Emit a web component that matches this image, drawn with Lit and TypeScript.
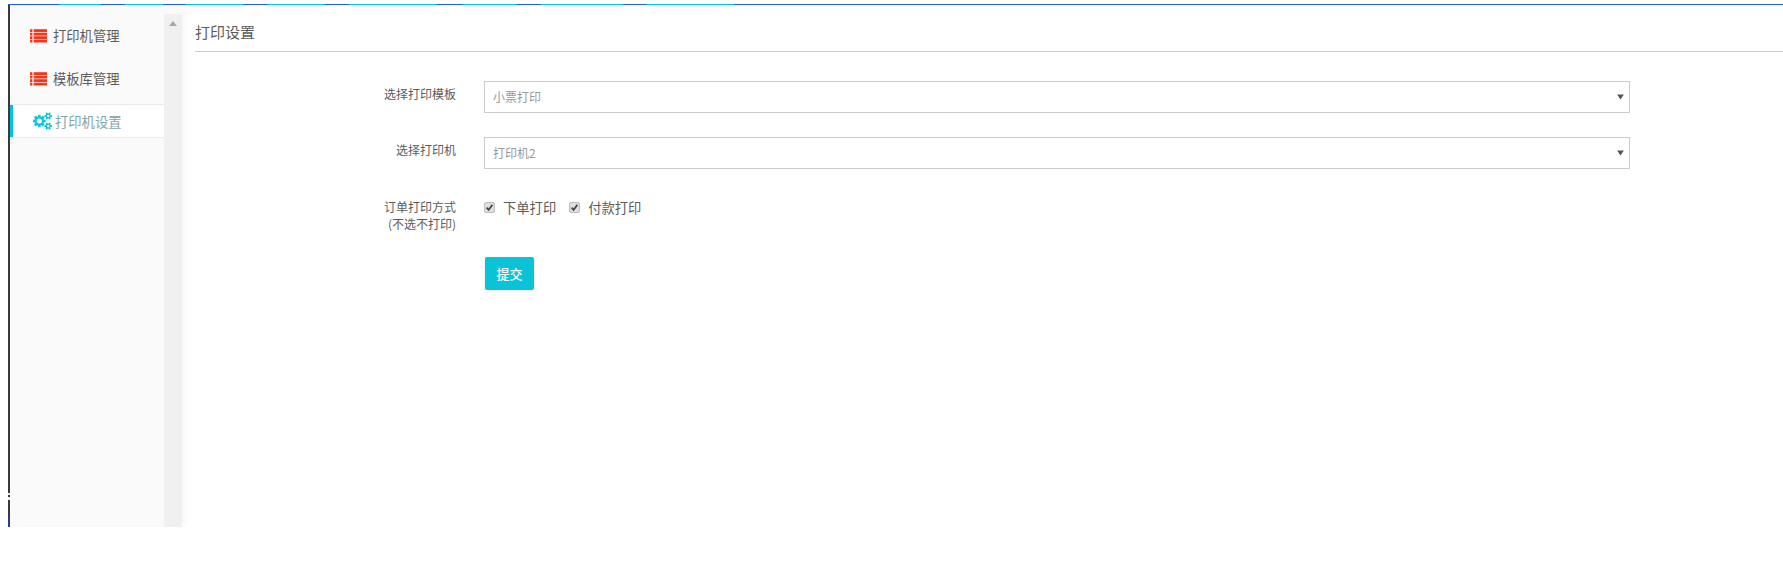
import { LitElement, html, css, svg } from "lit";
import { customElement } from "lit/decorators.js";

const COGS = "M896 640q0-106-75-181t-181-75-181 75-75 181 75 181 181 75 181-75 75-181zm768 512q0-52-38-90t-90-38-90 38-38 90q0 53 37.5 90.5t90.5 37.5 90.5-37.5 37.5-90.5zm0-1024q0-52-38-90t-90-38-90 38-38 90q0 53 37.5 90.5t90.5 37.5 90.5-37.5 37.5-90.5zm-384 421v185q0 10-7 19.5t-16 10.5l-155 24q-11 35-32 76 34 48 90 115 7 11 7 20 0 12-7 19-23 30-82.5 89.5t-78.5 59.5q-11 0-21-7l-115-90q-37 19-77 31-11 108-23 155-7 24-30 24h-186q-11 0-20-7.5t-10-17.5l-23-153q-34-10-75-31l-118 89q-7 7-20 7-11 0-21-8-144-133-144-160 0-9 7-19 10-14 41-53t47-61q-23-44-35-82l-152-24q-10-1-17-9.5t-7-19.5v-185q0-10 7-19.5t16-10.5l155-24q11-35 32-76-34-48-90-115-7-11-7-20 0-12 7-20 22-30 82-89t79-59q11 0 21 7l115 90q34-18 77-32 11-108 23-154 7-24 30-24h186q11 0 20 7.5t10 17.5l23 153q34 10 75 31l118-89q8-7 20-7 11 0 21 8 144 133 144 160 0 8-7 19-12 16-42 54t-45 60q23 48 34 82l152 23q10 2 17 10.5t7 19.5zm640 533v140q0 16-149 31-12 27-30 52 51 113 51 138 0 4-4 7-122 71-124 71-8 0-46-47t-52-68q-20 2-30 2t-30-2q-14 21-52 68t-46 47q-2 0-124-71-4-3-4-7 0-25 51-138-18-25-30-52-149-15-149-31v-140q0-16 149-31 13-29 30-52-51-113-51-138 0-4 4-7 4-2 35-20t59-34 30-16q8 0 46 46.5t52 67.5q20-2 30-2t30 2q51-71 92-112l6-2q4 0 124 70 4 3 4 7 0 25-51 138 17 23 30 52 149 15 149 31zm0-1024v140q0 16-149 31-12 27-30 52 51 113 51 138 0 4-4 7-122 71-124 71-8 0-46-47t-52-68q-20 2-30 2t-30-2q-14 21-52 68t-46 47q-2 0-124-71-4-3-4-7 0-25 51-138-18-25-30-52-149-15-149-31v-140q0-16 149-31 13-29 30-52-51-113-51-138 0-4 4-7 4-2 35-20t59-34 30-16q8 0 46 46.5t52 67.5q20-2 30-2t30 2q51-71 92-112l6-2q4 0 124 70 4 3 4 7 0 25-51 138 17 23 30 52 149 15 149 31z";

const listIcon = html`<svg class="ico list" viewBox="0 0 17 14" aria-hidden="true">
  ${[0, 1, 2, 3].map(
    (i) => svg`<rect x="0" y="${i * 3.5 + 0.2}" width="2.4" height="2.8" /><rect x="3.6" y="${i * 3.5 + 0.2}" width="13.4" height="2.8" />`
  )}
</svg>`;

const cogsIcon = html`<svg class="ico cogs" viewBox="0 -256 1920 1792" aria-hidden="true"><path d="${COGS}" /></svg>`;

const caret = html`<svg class="caret" viewBox="0 0 8 7" aria-hidden="true"><path d="M0 0.5H8L4 6.5Z" /></svg>`;

@customElement("app-root")
export class AppRoot extends LitElement {
  static styles = css`
    :host {
      display: block;
      height: 565px;
      background: #fff;
      font-family: "Noto Sans CJK SC", "Liberation Sans", sans-serif;
      color: #555;
      overflow: hidden;
    }
    .frame {
      margin: 4px 0 0 8px;
      height: 523px;
      box-sizing: border-box;
      display: flex;
      overflow: hidden;
      border-top: 1px solid;
      border-image: linear-gradient(
          to right,
          #1f5fe8 0 52px,
          #08c4d6 52px 94px,
          #1f5fe8 94px 118px,
          #08c4d6 118px 156px,
          #1f5fe8 156px 179px,
          #08c4d6 179px 236px,
          #1f5fe8 236px 260px,
          #08c4d6 260px 318px,
          #1f5fe8 318px 342px,
          #08c4d6 342px 430px,
          #1f5fe8 430px 454px,
          #08c4d6 454px 509px,
          #1f5fe8 509px 533px,
          #08c4d6 533px 615px,
          #1f5fe8 615px 638px,
          #08c4d6 638px 726px,
          #1f5fe8 726px
        )
        1;
    }
    .edge {
      width: 2px;
      flex: none;
      background: linear-gradient(
        to bottom,
        #3a3a3a 0 488px,
        #e8eef2 488px 490px,
        #3a3a3a 490px 492px,
        #e8eef2 492px 495px,
        #3a3a3a 495px 513px,
        #24408f 513px
      );
    }
    .side {
      width: 172px;
      flex: none;
      display: flex;
      background: #fafafa;
      box-shadow: 3px 0 6px rgba(0, 0, 0, 0.04);
    }
    .nav {
      width: 154px;
      flex: none;
      padding-top: 9px;
      box-sizing: border-box;
    }
    .item {
      height: 43px;
      display: flex;
      align-items: center;
      gap: 6px;
      padding-left: 20px;
      font-size: 13.3px;
      color: #5c5c5c;
      box-sizing: border-box;
    }
    .item.active {
      height: 34px;
      margin-top: 4px;
      padding-left: 23px;
      gap: 3px;
      color: #7fa5ad;
      background: #fff;
      border-top: 1px solid #e9eaee;
      border-bottom: 1px solid #e9eaee;
      box-shadow: inset 3px 0 0 #00c3e3;
    }
    .ico {
      flex: none;
      display: block;
    }
    .list {
      width: 17px;
      height: 14px;
      fill: #f2381c;
    }
    .cogs {
      width: 19px;
      height: 18px;
      fill: #0fc6dc;
    }
    .track {
      width: 18px;
      flex: none;
      margin-top: 9px;
      background: #f0f0f0;
      display: flex;
      justify-content: center;
      padding-top: 7px;
      box-sizing: border-box;
    }
    .up {
      width: 0;
      height: 0;
      border-left: 4px solid transparent;
      border-right: 4px solid transparent;
      border-bottom: 5px solid #a8a8a8;
    }
    .main {
      flex: 1;
      min-width: 0;
      padding-left: 13px;
    }
    .title {
      height: 47px;
      box-sizing: border-box;
      border-bottom: 1px solid #ccc;
      padding-top: 16px;
      font-size: 15px;
      line-height: 22px;
      color: #5c5c5c;
    }
    .form {
      width: 1435px;
      padding-top: 29px;
      display: flex;
      flex-direction: column;
    }
    .row {
      display: grid;
      grid-template-columns: 261px 1146px;
      column-gap: 28px;
    }
    .row + .row {
      margin-top: 24px;
    }
    .row + .btn-row {
      margin-top: 25px;
    }
    .label {
      text-align: right;
      font-size: 12px;
      line-height: 17px;
      color: #5c5c5c;
      padding-top: 4px;
    }
    .label.multi {
      padding-top: 5px;
    }
    .select {
      height: 32px;
      box-sizing: border-box;
      border: 1px solid #ccc;
      background: #fff;
      display: flex;
      align-items: center;
      justify-content: space-between;
      padding: 0 5px 2px 8px;
      font-size: 12px;
      color: #999;
    }
    .caret {
      width: 7px;
      height: 6px;
      fill: #555;
      margin-top: 2px;
    }
    .checks {
      display: flex;
      align-items: center;
      height: 20px;
      margin-top: 4px;
      font-size: 13.3px;
      color: #5c5c5c;
    }
    .check {
      display: flex;
      align-items: center;
      gap: 8px;
      margin-right: 13px;
    }
    input {
      appearance: none;
      margin: 0;
      width: 11px;
      height: 11px;
      box-sizing: border-box;
      border: 1px solid #bdbdbd;
      border-radius: 2px;
      background-color: #dedede;
      background-position: center;
      background-repeat: no-repeat;
      background-size: 9px 9px;
    }
    input:checked {
      background-image: url("data:image/svg+xml,%3Csvg xmlns='http://www.w3.org/2000/svg' viewBox='0 0 9 9'%3E%3Cpath d='M1.6 4.6L3.6 6.8L7.4 1.8' fill='none' stroke='%23444' stroke-width='1.7'/%3E%3C/svg%3E");
    }
    button {
      justify-self: start;
      margin-left: 1px;
      width: 49px;
      height: 33px;
      border: 0;
      border-radius: 2px;
      background: #0bc3d7;
      color: #fff;
      font: 500 13px "Noto Sans CJK SC", "Liberation Sans", sans-serif;
      box-shadow: 0 1px 3px rgba(120, 60, 160, 0.15);
      padding: 0;
    }
  `;

  render() {
    return html`
      <div class="frame">
        <div class="edge"></div>
        <aside class="side">
          <nav class="nav">
            <div class="item">${listIcon}<span>打印机管理</span></div>
            <div class="item">${listIcon}<span>模板库管理</span></div>
            <div class="item active">${cogsIcon}<span>打印机设置</span></div>
          </nav>
          <div class="track"><div class="up"></div></div>
        </aside>
        <main class="main">
          <div class="title">打印设置</div>
          <form class="form" @submit=${(e: Event) => e.preventDefault()}>
            <div class="row">
              <div class="label">选择打印模板</div>
              <div class="select"><span>小票打印</span>${caret}</div>
            </div>
            <div class="row">
              <div class="label">选择打印机</div>
              <div class="select"><span>打印机2</span>${caret}</div>
            </div>
            <div class="row">
              <div class="label multi">订单打印方式<br />(不选不打印)</div>
              <div class="checks">
                <label class="check"><input type="checkbox" checked /><span>下单打印</span></label>
                <label class="check"><input type="checkbox" checked /><span>付款打印</span></label>
              </div>
            </div>
            <div class="row btn-row">
              <div></div>
              <button type="submit">提交</button>
            </div>
          </form>
        </main>
      </div>
    `;
  }
}
